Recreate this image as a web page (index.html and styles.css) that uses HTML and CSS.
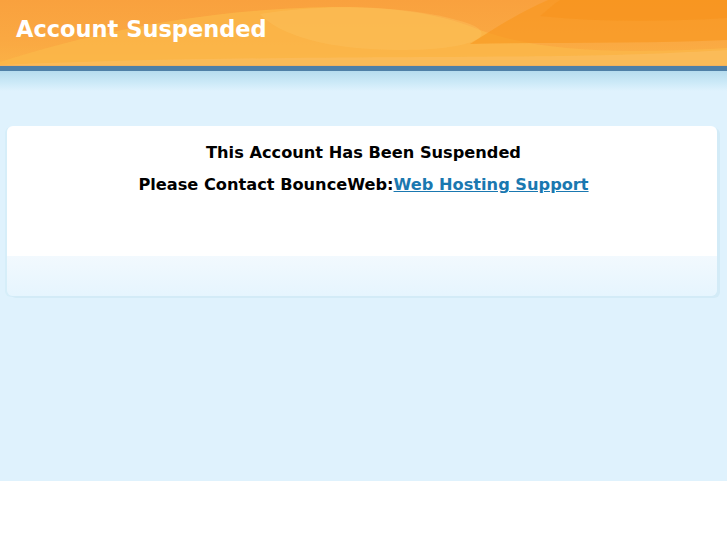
FILE: index.html
```html
<!DOCTYPE html>
<html lang="en">

<head>
    <meta charset="UTF-8">
    <title>Account Suspended</title>
    <link rel="stylesheet" href="styles.css">
</head>

<body>
    <div id="header">
        <svg class="waves" width="727" height="65" viewBox="0 0 727 65" preserveAspectRatio="none">
            <!-- big light swell through the middle -->
            <path d="M0 62 C70 40 170 14 300 8 C390 4 440 14 480 30 C540 52 620 54 727 48 L727 65 L0 65 Z" fill="#fbb84a" opacity="0.75"/>
            <path d="M260 14 C330 2 420 6 470 24 C500 36 470 50 400 50 C330 50 280 36 260 14 Z" fill="#fcc260" opacity="0.4"/>
            <!-- darker top right -->
            <path d="M548 0 L727 0 L727 40 C650 44 560 42 470 44 C495 28 520 12 548 0 Z" fill="#f8961c" opacity="0.6"/>
            <path d="M560 0 L727 0 L727 18 C660 22 600 22 540 16 C548 10 552 5 560 0 Z" fill="#f8921a" opacity="0.5"/>
            <!-- pale bottom band -->
            <path d="M0 65 C200 56 420 58 560 56 C640 55 690 52 727 50 L727 65 Z" fill="#fcc066" opacity="0.55"/>
        </svg>
        <h1>Account Suspended</h1>
    </div>
    <div id="stripe"></div>

    <div id="main">
        <div class="card">
            <div class="card-body">
                <p>This Account Has Been Suspended</p>
                <p>Please Contact BounceWeb:<a href="#">Web Hosting Support</a></p>
            </div>
            <div class="card-foot"></div>
        </div>
    </div>
</body>

</html>
```

FILE: styles.css
```css
body {
    margin: 0;
    padding: 0;
    background-color: white;
    font-family: 'DejaVu Sans', Verdana, sans-serif;
}

#header {
    position: relative;
    height: 65px;
    overflow: hidden;
    background: linear-gradient(#f9a13e, #faa842 60%, #fbb146);
}

.waves {
    position: absolute;
    left: 0;
    top: 0;
}

h1 {
    position: relative;
    margin: 0;
    padding: 15px 0 0 16px;
    font-size: 22.5px;
    line-height: 29px;
    font-weight: bold;
    color: white;
}

#stripe {
    height: 6px;
    background-color: #4f80a7;
    border-top: 1px solid #f3b25c;
    box-sizing: border-box;
}

#main {
    height: 410px;
    padding-top: 55px;
    box-sizing: border-box;
    background: linear-gradient(#b6dcee 0, #cdeaf8 12px, #dff2fd 20px, #dff2fd 100%);
}

.card {
    margin-left: 7px;
    width: 710px;
    border-radius: 6px;
    overflow: hidden;
    box-shadow: 3px 2px 0 #d3ebf7, -2px 1px 0 #d6eef9;
}

.card-body {
    height: 130px;
    padding: 11px 0 0 3px;
    box-sizing: border-box;
    background-color: white;
    text-align: center;
}

.card-body p {
    margin: 0;
    font-size: 16.2px;
    font-weight: bold;
    line-height: 32px;
    color: black;
}

.card-body a {
    color: #1a78b0;
}

.card-foot {
    height: 40px;
    background: linear-gradient(#f2f9fe, #e6f5fe);
}
```
